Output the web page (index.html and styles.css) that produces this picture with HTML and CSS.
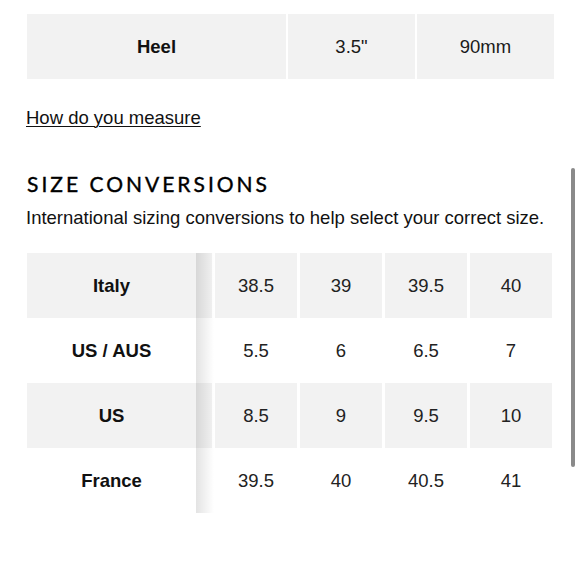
FILE: index.html
```html
<!DOCTYPE html>
<html>
<head>
<meta charset="utf-8">
<link rel="stylesheet" href="styles.css">
</head>
<body>
<div class="page">
  <div class="heel-table">
    <div class="cell label wide">Heel</div>
    <div class="cell mid">3.5"</div>
    <div class="cell last">90mm</div>
  </div>

  <a class="measure" href="#">How do you measure</a>

  <h2 class="title">SIZE CONVERSIONS</h2>
  <p class="intro">International sizing conversions to help select your correct size.</p>

  <div class="conv">
    <div class="labels">
      <div class="lcell shade">Italy</div>
      <div class="lcell">US / AUS</div>
      <div class="lcell shade">US</div>
      <div class="lcell">France</div>
    </div>
    <div class="scroller">
      <div class="row shade">
        <div class="vcell stub"></div><div class="vcell">38.5</div><div class="vcell">39</div><div class="vcell">39.5</div><div class="vcell">40</div>
      </div>
      <div class="row">
        <div class="vcell stub"></div><div class="vcell">5.5</div><div class="vcell">6</div><div class="vcell">6.5</div><div class="vcell">7</div>
      </div>
      <div class="row shade">
        <div class="vcell stub"></div><div class="vcell">8.5</div><div class="vcell">9</div><div class="vcell">9.5</div><div class="vcell">10</div>
      </div>
      <div class="row">
        <div class="vcell stub"></div><div class="vcell">39.5</div><div class="vcell">40</div><div class="vcell">40.5</div><div class="vcell">41</div>
      </div>
      <div class="edge-shadow"></div>
    </div>
  </div>
</div>
<div class="scrollbar"></div>
</body>
</html>
```

FILE: styles.css
```css
* { box-sizing: border-box; }
html, body { margin: 0; padding: 0; background: #fff; }
body {
  font-family: "Liberation Sans", Arial, sans-serif;
  color: #111;
  width: 580px;
  height: 580px;
  overflow: hidden;
  position: relative;
}
.page {
  padding: 14px 0 0 27px;
  width: 554px;
}
.heel-table {
  display: grid;
  grid-template-columns: 259px 127px 137px;
  column-gap: 2px;
  height: 65px;
}
.cell {
  background: #f2f2f2;
  display: flex;
  align-items: center;
  justify-content: center;
  font-size: 18.5px;
  color: #1a1a1a;
}
.label { font-weight: bold; color: #111; }
.measure {
  display: inline-block;
  margin-top: 28px;
  margin-left: -1px;
  font-size: 18.5px;
  line-height: 22px;
  color: #111;
  text-decoration: underline;
  text-underline-offset: 2px;
  text-decoration-thickness: 1px;
}
.title {
  margin: 43px 0 0 0;
  font-family: "Lato", "Liberation Sans", sans-serif;
  font-weight: 400;
  font-size: 21px;
  line-height: 24px;
  letter-spacing: 3px;
  color: #000;
  -webkit-text-stroke: 0.4px #000;
}
.intro {
  margin: 11px 0 0 -1px;
  font-size: 18.5px;
  line-height: 22px;
  color: #111;
}
.conv {
  margin-top: 24px;
  display: flex;
}
.labels {
  width: 169px;
  display: flex;
  flex-direction: column;
}
.lcell {
  height: 65px;
  display: flex;
  align-items: center;
  justify-content: center;
  font-weight: bold;
  font-size: 18.5px;
  color: #111;
}
.labels .shade, .row.shade .vcell { background: #f2f2f2; }
.scroller {
  position: relative;
  display: flex;
  flex-direction: column;
  width: 356px;
}
.row {
  display: grid;
  grid-template-columns: 16px 82px 82px 82px 82px;
  column-gap: 3px;
  height: 65px;
}
.vcell {
  display: flex;
  align-items: center;
  justify-content: center;
  font-size: 18.5px;
  color: #222;
}
.edge-shadow {
  position: absolute;
  left: 0;
  top: 0;
  width: 18px;
  height: 260px;
  background: linear-gradient(to right, rgba(0,0,0,0.11), rgba(0,0,0,0));
}
.scrollbar {
  position: absolute;
  left: 571px;
  top: 168px;
  width: 4px;
  height: 299px;
  border-radius: 2px;
  background: #8a8a8a;
}
```
